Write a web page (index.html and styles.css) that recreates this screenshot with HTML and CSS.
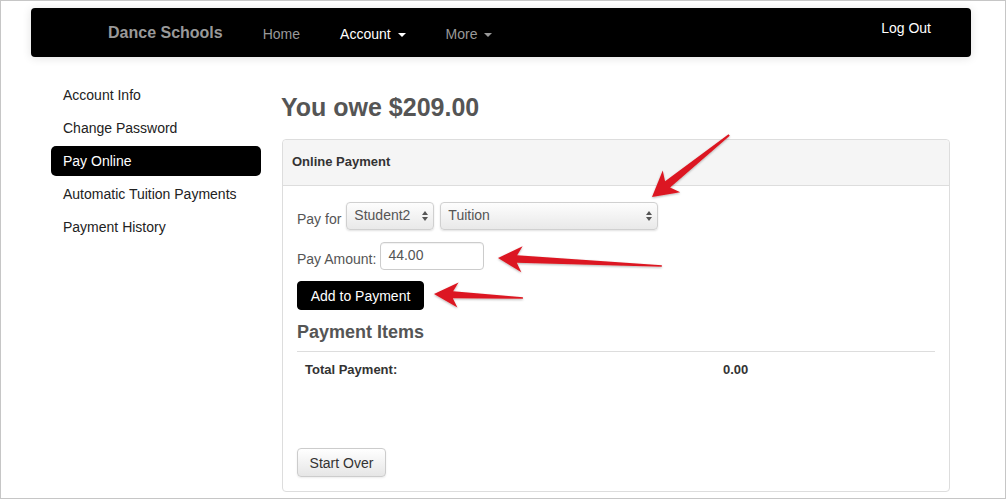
FILE: index.html
```html
<!DOCTYPE html>
<html lang="en">
<head>
    <meta charset="UTF-8">
    <title>Dance Schools - Pay Online</title>
    <link rel="stylesheet" href="styles.css">
</head>
<body>
    <div class="frame">
        <nav class="navbar">
            <a class="brand" href="#">Dance Schools</a>
            <ul class="nav">
                <li><a href="#">Home</a></li>
                <li class="active"><a href="#">Account <span class="caret"></span></a></li>
                <li><a href="#">More <span class="caret"></span></a></li>
            </ul>
            <a class="logout" href="#">Log Out</a>
        </nav>

        <div class="main">
            <ul class="sidebar">
                <li><a href="#">Account Info</a></li>
                <li><a href="#">Change Password</a></li>
                <li class="active"><a href="#">Pay Online</a></li>
                <li><a href="#">Automatic Tuition Payments</a></li>
                <li><a href="#">Payment History</a></li>
            </ul>

            <section class="content">
                <h1>You owe $209.00</h1>
                <div class="panel">
                    <div class="panel-heading">Online Payment</div>
                    <div class="panel-body">
                        <div class="form-row">
                            <label>Pay for</label>
                            <span class="select-wrap student">
                                <select><option>Student2</option></select>
                            </span>
                            <span class="select-wrap item">
                                <select><option>Tuition</option></select>
                            </span>
                        </div>
                        <div class="form-row">
                            <label>Pay Amount:</label>
                            <input type="text" class="amount" value="44.00">
                        </div>
                        <button class="btn btn-dark">Add to Payment</button>

                        <h3>Payment Items</h3>
                        <table class="items">
                            <tr>
                                <th>Total Payment:</th>
                                <th>0.00</th>
                            </tr>
                        </table>

                        <button class="btn btn-light">Start Over</button>
                    </div>
                </div>
            </section>
        </div>

        <!-- annotation arrows drawn over the screenshot -->
        <svg class="arrows" width="1006" height="499" viewBox="0 0 1006 499">
            <defs>
                <filter id="shadow" x="-20%" y="-20%" width="140%" height="140%">
                    <feDropShadow dx="0" dy="1" stdDeviation="1" flood-color="#000" flood-opacity="0.3"/>
                </filter>
            </defs>
            <g filter="url(#shadow)" fill="#dc1820">
                <polygon transform="translate(652 197) rotate(-38.8)" points="0,0 25,-14 20,-4 99,-1 99,1 20,4 25,14"/>
                <polygon transform="translate(498 258) rotate(2.8)" points="0,0 24,-13 19,-3.8 164,-0.8 164,0.8 19,3.8 24,13"/>
                <polygon transform="translate(434 294) rotate(2.6)" points="0,0 24,-12.5 19,-3.5 89,-0.8 89,0.8 19,3.5 24,12.5"/>
            </g>
        </svg>
    </div>
</body>
</html>
```

FILE: styles.css
```css
* {
    box-sizing: border-box;
}

body {
    margin: 0;
    font-family: 'Liberation Sans', Arial, Helvetica, sans-serif;
    font-size: 14px;
    color: #222;
    background-color: #fff;
}

a {
    text-decoration: none;
    color: inherit;
}

ul {
    list-style: none;
    margin: 0;
    padding: 0;
}

.frame {
    position: relative;
    width: 1006px;
    height: 499px;
    border: 1px solid #c6c6c6;
    overflow: hidden;
}

/* top bar */
.navbar {
    display: flex;
    align-items: center;
    width: 940px;
    height: 49px;
    margin: 7px 0 0 30px;
    padding: 0 40px 0 77px;
    background-color: #000;
    border-radius: 4px;
    box-shadow: 0 1px 10px rgba(0, 0, 0, 0.12);
}

.brand {
    font-size: 16px;
    font-weight: bold;
    color: #999;
    margin-top: 1px;
    margin-right: 20px;
}

.nav {
    display: flex;
    margin-top: 2px;
}

.nav li a {
    display: block;
    padding: 0 20px;
    color: #999;
    line-height: 20px;
}

.nav li.active a {
    color: #fff;
}

.caret {
    display: inline-block;
    width: 0;
    height: 0;
    margin-left: 3px;
    vertical-align: middle;
    border-top: 4px solid currentColor;
    border-left: 4px solid transparent;
    border-right: 4px solid transparent;
}

.logout {
    margin-left: auto;
    align-self: flex-start;
    margin-top: 10px;
    color: #fff;
    line-height: 20px;
}

/* page body */
.main {
    display: flex;
    align-items: flex-start;
    gap: 21px;
    padding-left: 50px;
    margin-top: 23px;
}

.sidebar {
    display: flex;
    flex-direction: column;
    gap: 3px;
    width: 210px;
}

.sidebar li a {
    display: block;
    height: 30px;
    line-height: 30px;
    padding: 0 12px;
    border-radius: 5px;
    color: #222;
}

.sidebar li.active a {
    background-color: #000;
    color: #fff;
}

.content {
    width: 668px;
}

h1 {
    margin: 12px 0 17px -1px;
    font-size: 25px;
    line-height: 30px;
    color: #555;
}

.panel {
    border: 1px solid #ddd;
    border-radius: 4px;
    height: 353px;
}

.panel-heading {
    height: 46px;
    line-height: 44px;
    padding-left: 9px;
    background-color: #f5f5f5;
    border-bottom: 1px solid #ddd;
    border-radius: 4px 4px 0 0;
    font-size: 13px;
    font-weight: bold;
    color: #333;
}

.panel-body {
    padding: 16px 14px 14px;
}

.form-row {
    display: flex;
    align-items: center;
    height: 28px;
    margin-bottom: 12px;
    color: #555;
}

.form-row label {
    margin-right: 5px;
    margin-top: 6px;
}

.form-row:nth-child(2) {
    margin-bottom: 11px;
}

.form-row:nth-child(2) label {
    margin-right: 4px;
    margin-top: 6px;
}

.select-wrap {
    position: relative;
    display: block;
    height: 28px;
    margin-right: 6px;
}

.select-wrap.student {
    width: 88px;
}

.select-wrap.item {
    width: 218px;
}

.select-wrap select {
    appearance: none;
    -webkit-appearance: none;
    width: 100%;
    height: 28px;
    padding: 0 20px 2px 7px;
    font-family: inherit;
    font-size: 14px;
    color: #555;
    border: 1px solid #d0d0d0;
    border-radius: 4px;
    background: linear-gradient(#fdfdfd, #e9e9e9);
    box-shadow: 0 1px 2px rgba(0, 0, 0, 0.12);
}

.select-wrap::before,
.select-wrap::after {
    content: "";
    position: absolute;
    right: 6px;
    width: 0;
    height: 0;
    border-left: 3.5px solid transparent;
    border-right: 3.5px solid transparent;
    pointer-events: none;
}

.select-wrap::before {
    top: 9px;
    border-bottom: 4px solid #555;
}

.select-wrap::after {
    top: 15px;
    border-top: 4px solid #555;
}

.amount {
    width: 104px;
    height: 28px;
    padding: 0 7px 3px;
    font-family: inherit;
    font-size: 14px;
    color: #555;
    border: 1px solid #ccc;
    border-radius: 4px;
    box-shadow: inset 0 1px 1px rgba(0, 0, 0, 0.06);
}

.btn {
    display: block;
    height: 29px;
    padding: 0;
    font-family: inherit;
    font-size: 14px;
    white-space: nowrap;
    border-radius: 4px;
    cursor: pointer;
}

.btn-dark {
    width: 127px;
    background-color: #000;
    border: 1px solid #000;
    color: #fff;
}

.btn-light {
    width: 89px;
    margin-top: 60px;
    color: #333;
    border: 1px solid #ccc;
    background: linear-gradient(#fff, #e6e6e6);
    box-shadow: 0 1px 2px rgba(0, 0, 0, 0.08);
}

h3 {
    margin: 10px 0 0;
    padding-bottom: 7px;
    font-size: 18px;
    line-height: 24px;
    color: #555;
    border-bottom: 1px solid #ddd;
    width: 638px;
}

.items {
    width: 638px;
    border-collapse: collapse;
}

.items th {
    padding: 8px;
    text-align: left;
    font-size: 13px;
    line-height: 20px;
    color: #333;
}

.items th:first-child {
    width: 418px;
}

/* annotation layer */
.arrows {
    position: absolute;
    top: -1px;
    left: -1px;
    pointer-events: none;
}
```
